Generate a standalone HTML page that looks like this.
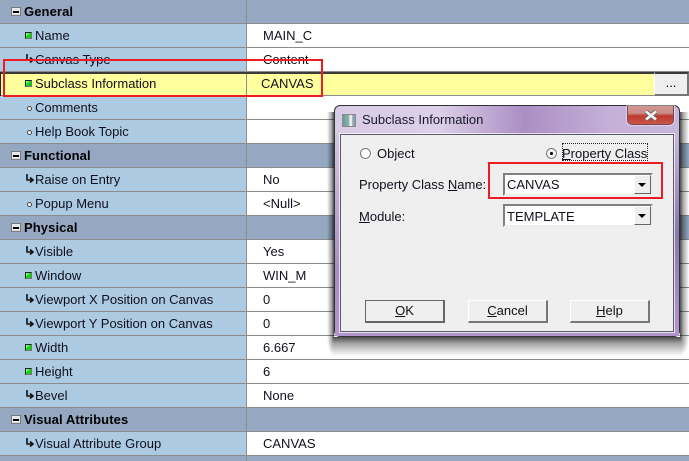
<!DOCTYPE html>
<html><head><meta charset="utf-8"><style>
html,body{margin:0;padding:0;background:#fff}
#p{position:relative;width:689px;height:461px;overflow:hidden;background:#fff;font:13px/18px "Liberation Sans",sans-serif;letter-spacing:0;color:#10101c}
#p div,#p svg,#p span.a{position:absolute}
.r{left:0;width:689px;height:23px;border-bottom:1px solid #8c8c8c;background:#fff}
.r i{position:absolute;left:0;top:0;width:246px;height:23px;background:#adcae3;border-right:1px solid #8c8c8c}
.h{background:#94a8c1}
.h i{background:#94a8c1}
.l{left:35px;white-space:nowrap}
.v{left:263px;white-space:nowrap}
.b{font-weight:bold;left:24px;color:#000;letter-spacing:.1px}
.m{left:11px;width:8px;height:7px;background:#e8e8e8;border:1px solid #777;box-sizing:content-box}
.m:after{content:"";position:absolute;left:1px;top:3px;width:6px;height:2px;background:#000}
.g{left:25px;width:5px;height:5px;background:linear-gradient(135deg,#e8ffe8 0,#10e010 45%,#08c008 100%);border:1px solid #222;border-right-color:#777;border-bottom-color:#777}
.d{left:27px;width:3px;height:3px;border:1px solid #444;border-radius:50%;background:#fff}
.btn{background:#efefef;box-sizing:border-box;height:23px;width:80px;top:300px;border:1px solid;border-color:#fff #777 #777 #fff;border-width:1px 2px 2px 1px;text-align:center;line-height:19px;color:#111}
.cb{left:503px;width:150px;height:23px;box-sizing:border-box;background:#fff;border:2px solid #808080;border-right-color:#eee;border-bottom-color:#eee;padding:0;color:#10101c}
.cb span{position:absolute;left:2px;top:1px;line-height:17px}
.cb b{position:absolute;right:0;top:0;width:17px;height:19px;box-sizing:border-box;background:#efefef;border:1px solid;border-color:#fff #666 #666 #fff}
.cb b:after{content:"";position:absolute;left:3px;top:7px;border:4px solid transparent;border-top:4px solid #000;border-bottom:0}
.t{white-space:nowrap;color:#10101c}
</style></head><body><div id="p">

<div class="r h" style="top:0"><i></i></div>
<div class="r" style="top:24px"><i></i></div>
<div class="r" style="top:48px"><i></i></div>
<div class="r" style="top:96px"><i></i></div>
<div class="r" style="top:120px"><i></i></div>
<div class="r h" style="top:144px"><i></i></div>
<div class="r" style="top:168px"><i></i></div>
<div class="r" style="top:192px"><i></i></div>
<div class="r h" style="top:216px"><i></i></div>
<div class="r" style="top:240px"><i></i></div>
<div class="r" style="top:264px"><i></i></div>
<div class="r" style="top:288px"><i></i></div>
<div class="r" style="top:312px"><i></i></div>
<div class="r" style="top:336px"><i></i></div>
<div class="r" style="top:360px"><i></i></div>
<div class="r" style="top:384px"><i></i></div>
<div class="r h" style="top:408px"><i></i></div>
<div class="r" style="top:432px"><i></i></div>
<div class="r h" style="top:456px"><i></i></div>

<!-- selected row -->
<div style="left:0;top:72px;width:654px;height:24px;background:#ffff9e;border-top:2px solid #3a3a3a;box-sizing:border-box;border-bottom:1px solid #8c8c8c"></div>
<div style="left:0;top:72px;width:1px;height:24px;background:#222"></div>
<div style="left:246px;top:74px;width:1px;height:21px;background:#8c8c8c"></div>
<div style="left:654px;top:72px;width:35px;height:24px;box-sizing:border-box;background:#efefef;border-top:2px solid #3a3a3a;border-bottom:2px solid #777;border-right:2px solid #777;border-left:1px solid #fff;text-align:center;line-height:18px;color:#000">...</div>

<!-- headers -->
<div class="m" style="top:7px"></div><div class="l b" style="top:3px">General</div>
<div class="m" style="top:151px"></div><div class="l b" style="top:147px">Functional</div>
<div class="m" style="top:223px"></div><div class="l b" style="top:219px">Physical</div>
<div class="m" style="top:415px"></div><div class="l b" style="top:411px">Visual Attributes</div>

<!-- labels -->
<div class="g" style="top:32px"></div><div class="l" style="top:27px">Name</div><div class="v" style="top:27px">MAIN_C</div>
<svg style="left:25px;top:54px" width="9" height="10"><path d="M2 0V6H7M5 3.5L8 6L5 8.5" fill="none" stroke="#111" stroke-width="1.6"/></svg><div class="l" style="top:51px">Canvas Type</div><div class="v" style="top:51px">Content</div>
<div class="g" style="top:80px"></div><div class="l" style="top:75px">Subclass Information</div><div class="v" style="top:75px;left:261px">CANVAS</div>
<div class="d" style="top:106px"></div><div class="l" style="top:99px">Comments</div>
<div class="d" style="top:130px"></div><div class="l" style="top:123px">Help Book Topic</div>

<svg style="left:25px;top:174px" width="9" height="10"><path d="M2 0V6H7M5 3.5L8 6L5 8.5" fill="none" stroke="#111" stroke-width="1.6"/></svg><div class="l" style="top:171px">Raise on Entry</div><div class="v" style="top:171px">No</div>
<div class="d" style="top:202px"></div><div class="l" style="top:195px">Popup Menu</div><div class="v" style="top:195px">&lt;Null&gt;</div>

<svg style="left:25px;top:246px" width="9" height="10"><path d="M2 0V6H7M5 3.5L8 6L5 8.5" fill="none" stroke="#111" stroke-width="1.6"/></svg><div class="l" style="top:243px">Visible</div><div class="v" style="top:243px">Yes</div>
<div class="g" style="top:272px"></div><div class="l" style="top:267px">Window</div><div class="v" style="top:267px">WIN_M</div>
<svg style="left:25px;top:294px" width="9" height="10"><path d="M2 0V6H7M5 3.5L8 6L5 8.5" fill="none" stroke="#111" stroke-width="1.6"/></svg><div class="l" style="top:291px">Viewport X Position on Canvas</div><div class="v" style="top:291px">0</div>
<svg style="left:25px;top:318px" width="9" height="10"><path d="M2 0V6H7M5 3.5L8 6L5 8.5" fill="none" stroke="#111" stroke-width="1.6"/></svg><div class="l" style="top:315px">Viewport Y Position on Canvas</div><div class="v" style="top:315px">0</div>
<div class="g" style="top:344px"></div><div class="l" style="top:339px">Width</div><div class="v" style="top:339px">6.667</div>
<div class="g" style="top:368px"></div><div class="l" style="top:363px">Height</div><div class="v" style="top:363px">6</div>
<svg style="left:25px;top:390px" width="9" height="10"><path d="M2 0V6H7M5 3.5L8 6L5 8.5" fill="none" stroke="#111" stroke-width="1.6"/></svg><div class="l" style="top:387px">Bevel</div><div class="v" style="top:387px">None</div>
<svg style="left:25px;top:438px" width="9" height="10"><path d="M2 0V6H7M5 3.5L8 6L5 8.5" fill="none" stroke="#111" stroke-width="1.6"/></svg><div class="l" style="top:435px">Visual Attribute Group</div><div class="v" style="top:435px">CANVAS</div>

<!-- red rect 1 -->
<div style="left:3px;top:59px;width:320px;height:38px;box-sizing:border-box;border:2px solid #ed1c24"></div>

<!-- dialog shadow -->
<div style="left:334px;top:337px;width:346px;height:19px;background:linear-gradient(180deg,rgba(0,0,0,.7),rgba(0,0,0,.35) 35%,rgba(0,0,0,0))"></div>
<div style="left:680px;top:112px;width:9px;height:225px;background:linear-gradient(90deg,rgba(0,0,0,.7),rgba(0,0,0,.35) 35%,rgba(0,0,0,0))"></div>
<div style="left:680px;top:337px;width:9px;height:19px;background:radial-gradient(9px 19px at 0 0,rgba(0,0,0,.7),rgba(0,0,0,.35) 35%,rgba(0,0,0,0))"></div>
<div style="left:327px;top:112px;width:7px;height:225px;background:linear-gradient(270deg,rgba(0,0,0,.7),rgba(0,0,0,.35) 35%,rgba(0,0,0,0))"></div>
<div style="left:327px;top:337px;width:7px;height:19px;background:radial-gradient(7px 19px at 100% 0,rgba(0,0,0,.7),rgba(0,0,0,.35) 35%,rgba(0,0,0,0))"></div>

<!-- dialog -->
<div style="left:334px;top:105px;width:346px;height:232px;box-sizing:border-box;border-radius:6px;border:1px solid #333;background:linear-gradient(90deg,#d9cce6 0,#dcd0e8 30%,#ab8fc4 55%,#c4b0d8 80%,#c8b6dc 100%)"></div>
<div style="left:335px;top:134px;width:5px;height:197px;background:linear-gradient(180deg,#d4c8e0,#a98dc2 70%,#b295cc)"></div>
<div style="left:674px;top:134px;width:5px;height:197px;background:linear-gradient(180deg,#c8b6dc,#8a7aa8 50%,#b295cc)"></div>
<div style="left:335px;top:331px;width:344px;height:5px;background:#b295cc"></div>
<div style="left:340px;top:134px;width:334px;height:198px;box-sizing:border-box;background:#efefef;border:1px solid #5a5a6a;box-shadow:0 0 0 1px rgba(255,255,255,.7)"></div>

<!-- title icon -->
<div style="left:342px;top:114px;width:12px;height:11px;background:linear-gradient(90deg,#6f9c9a 0,#8fb3b0 50%,#e6ecec 55%,#e6ecec 75%,#8fa3b0 80%);border:1px solid #888"></div>
<div class="t" style="left:362px;top:111px;color:#1a1a2a">Subclass Information</div>

<!-- close -->
<div style="left:627px;top:106px;width:47px;height:19px;box-sizing:border-box;border:1px solid #7a4a50;border-top:0;border-radius:0 0 5px 5px;background:linear-gradient(180deg,#d39a94 0,#c98a84 40%,#c0382c 55%,#c8564a 100%);box-shadow:0 0 0 1px rgba(255,255,255,.4)"></div>
<svg style="left:644px;top:110px" width="14" height="11"><path d="M2 1.5L12 9.5M12 1.5L2 9.5" stroke="#666" stroke-width="4.4"/><path d="M2 1.5L12 9.5M12 1.5L2 9.5" stroke="#f4f4f4" stroke-width="2.6"/></svg>

<!-- radios -->
<div style="left:360px;top:148px;width:11px;height:11px;box-sizing:border-box;border-radius:50%;background:#fff;border:1px solid #777;box-shadow:1px 1px 0 #fff"></div>
<div class="t" style="left:377px;top:145px">Ob<u>j</u>ect</div>
<div style="left:546px;top:148px;width:11px;height:11px;box-sizing:border-box;border-radius:50%;background:#f4f4f4;border:1px solid #777;box-shadow:1px 1px 0 #fff"></div>
<div style="left:550px;top:152px;width:3px;height:3px;border-radius:50%;background:#000"></div>
<div class="t" style="left:562px;top:145px"><u>P</u>roperty Class</div>
<div style="left:562px;top:143px;width:86px;height:18px;box-sizing:border-box;border:1px dotted #222"></div>

<!-- combos -->
<div class="t" style="left:359px;top:176px">Property Class <u>N</u>ame:</div>
<div class="cb" style="top:173px"><span>CANVAS</span><b></b></div>
<div class="t" style="left:359px;top:208px"><u>M</u>odule:</div>
<div class="cb" style="top:204px"><span style="top:2px">TEMPLATE</span><b></b></div>

<!-- buttons -->
<div class="btn" style="left:365px;border-color:#666;border-width:1px 2px 2px 1px"><u>O</u>K</div>
<div class="btn" style="left:468px"><u>C</u>ancel</div>
<div class="btn" style="left:570px"><u>H</u>elp</div>

<!-- red rect 2 -->
<div style="left:488px;top:162px;width:175px;height:37px;box-sizing:border-box;border:2px solid #ed1c24"></div>
</div></body></html>
